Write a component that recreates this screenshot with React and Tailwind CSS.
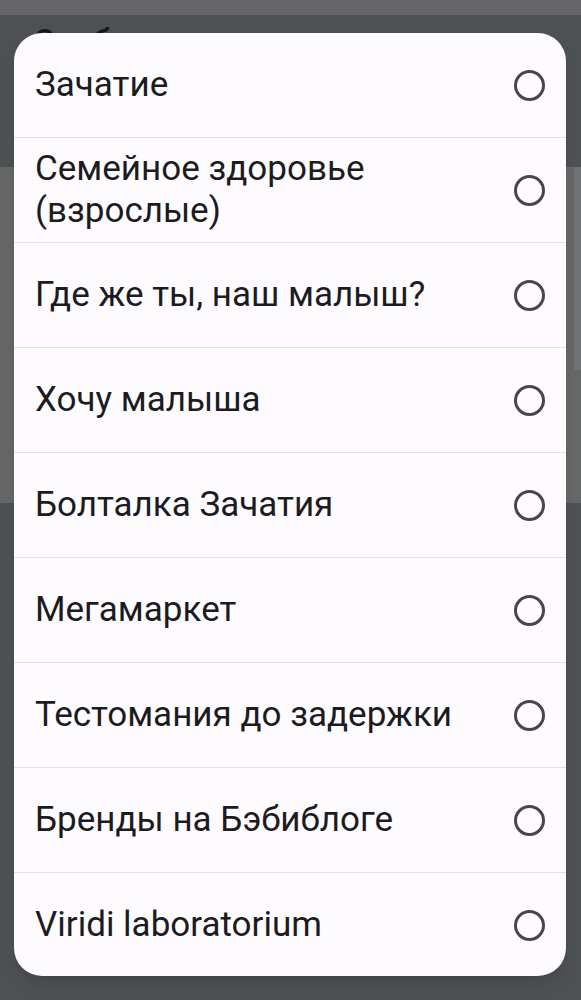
const groups = [
  'Зачатие',
  'Семейное здоровье (взрослые)',
  'Где же ты, наш малыш?',
  'Хочу малыша',
  'Болталка Зачатия',
  'Мегамаркет',
  'Тестомания до задержки',
  'Бренды на Бэбиблоге',
  'Viridi laboratorium',
];

const Radio = () => (
  <span className="w-[31px] h-[31px] shrink-0 rounded-full border-[3px] border-[#49454f]" />
);

export default function App() {
  return (
    <div
      className="relative h-[1000px] overflow-hidden bg-[#4d5154]"
      style={{ fontFamily: 'Roboto, "Noto Sans", sans-serif' }}
    >
      {/* page under the scrim */}
      <div className="h-[15px] bg-[#676567]" />
      <h1 className="px-[33px] pt-[6px] text-[34px] leading-[40px] font-medium text-[#151617]">
        Опубликовать в
      </h1>
      <div className="mt-[106px] h-[336px] bg-[#666767] flex justify-end">
        <div className="w-[7px] h-[203px] bg-[#717273]" />
      </div>

      {/* dialog */}
      <div className="absolute left-[14px] right-[15px] top-[33px] bottom-[24px] rounded-[28px] bg-[#fefbfe] overflow-hidden shadow-lg">
        {groups.map((name, i) => (
          <div
            key={name}
            className={`flex items-center justify-between pl-[21px] pr-[21px] ${
              i < groups.length - 1 ? 'h-[105px] border-b border-[#e3e0e3]' : 'h-[104px]'
            }`}
          >
            <span className="text-[35px] leading-[42px] font-normal text-[#1c1b1f] pr-4">{name}</span>
            <Radio />
          </div>
        ))}
      </div>
    </div>
  );
}
